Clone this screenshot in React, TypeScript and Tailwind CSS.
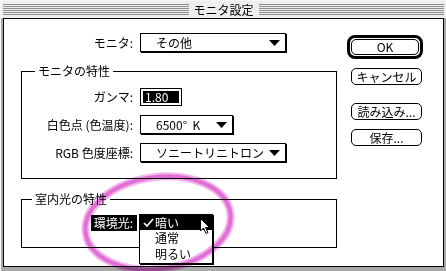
import { ReactNode } from 'react'

/** 클래식 Mac 팝업 메뉴의 ▼ */
function Arrow() {
  return (
    <svg width="11" height="6" viewBox="0 0 11 6" className="shrink-0">
      <path d="M0 0H11L5.5 6Z" fill="#000" />
    </svg>
  )
}

function Popup({ className, children }: { className: string; children: ReactNode }) {
  return (
    <div
      className={`flex h-[19px] items-center border border-black bg-white pl-[15px] pr-[5px] leading-[14px] shadow-[1px_1px_0_#000] ${className}`}
    >
      <span className="flex-1 whitespace-pre">{children}</span>
      <Arrow />
    </div>
  )
}

function Row({ label, children }: { label: string; children: ReactNode }) {
  return (
    <div className="flex h-[19px] items-center">
      <span className="w-[111px] text-right leading-[14px]">{label}</span>
      <div className="ml-[7px]">{children}</div>
    </div>
  )
}

function Button({ children }: { children: ReactNode }) {
  return (
    <div className="ml-[4px] flex h-[17px] w-[71px] items-center justify-center rounded-[5px] border border-black bg-white leading-[14px]">
      {children}
    </div>
  )
}

export default function App() {
  return (
    <div className="relative flex h-[271px] w-[446px] flex-col overflow-hidden border-l border-t border-[#f6f6f6] bg-[#a9a9a9] font-['Noto_Sans_CJK_JP','DejaVu_Sans',sans-serif] text-[12px] text-black">
      {/* 타이틀 바 */}
      <div className="flex h-[17px] items-center bg-[#eeeeee]">
        <div className="ml-[2px] h-[11px] flex-1 bg-[repeating-linear-gradient(to_bottom,#8c8c8c_0px,#8c8c8c_1px,transparent_1px,transparent_2px)]" />
        <span className="px-[5px] leading-[14px]">モニタ設定</span>
        <div className="mr-[2px] h-[11px] flex-1 bg-[repeating-linear-gradient(to_bottom,#8c8c8c_0px,#8c8c8c_1px,transparent_1px,transparent_2px)]" />
      </div>

      <div className="mx-[2px] mb-[4px] flex flex-1 border border-black bg-white">
        {/* 좌측: 모니터 선택 + 그룹 박스 */}
        <div className="w-[343px] pl-[17px] pt-[14px]">
          <div className="flex h-[19px] items-center">
            <span className="w-[112px] text-right leading-[14px]">モニタ:</span>
            <Popup className="ml-[7px] w-[146px]">その他</Popup>
          </div>

          <fieldset className="mt-[12px] w-[316px] border border-black pb-[16px] pt-[9px]">
            <legend className="ml-[13px] px-[3px] leading-[14px]">モニタの特性</legend>
            <div className="flex flex-col gap-[9px]">
              <Row label="ガンマ:">
                <div className="h-[18px] w-[42px] border border-black bg-white p-[2px]">
                  <div className="h-full bg-black pl-[2px] leading-[12px] text-white">1.80</div>
                </div>
              </Row>
              <Row label="白色点 (色温度):">
                <Popup className="w-[93px] pr-[3px]">6500°  K</Popup>
              </Row>
              <Row label="RGB 色度座標:">
                <Popup className="w-[146px]">ソニートリニトロン</Popup>
              </Row>
            </div>
          </fieldset>

          <fieldset className="mt-[13px] w-[316px] border border-black pb-[16px] pt-[9px]">
            <legend className="ml-[10px] px-[3px] leading-[14px]">室内光の特性</legend>
            <div className="flex h-[16px] items-center">
              <div className="flex w-[115px] justify-end">
                <span className="bg-black pl-[3px] pr-[4px] leading-[16px] text-white">環境光:</span>
              </div>
              <div className="relative ml-[2px] h-[16px] w-[74px]">
                {/* 열린 팝업 메뉴 */}
                <div className="absolute left-0 top-[-1px] z-10 w-[74px] border border-black bg-white pb-[1px] shadow-[1px_1px_0_#000]">
                  <div className="flex h-[15px] items-center bg-black pl-[3px] leading-[14px] text-white">
                    <svg width="12" height="9" viewBox="0 0 12 9" className="shrink-0">
                      <path d="M1 5L4 8L10 1" stroke="#fff" strokeWidth="1.6" fill="none" />
                    </svg>
                    <span>暗い</span>
                  </div>
                  <div className="flex h-[16px] items-center pl-[15px] leading-[14px]">通常</div>
                  <div className="flex h-[16px] items-center pl-[15px] leading-[14px]">明るい</div>
                  {/* 마우스 커서 */}
                  <svg width="12" height="16" viewBox="0 0 12 16" className="absolute left-[60px] top-[3px]">
                    <path
                      d="M0.5 0.5V13L3.5 10L6 15.5L8 14.5L5.5 9.5H9.5Z"
                      fill="#fff"
                      stroke="#000"
                      strokeWidth="1"
                    />
                  </svg>
                </div>
              </div>
            </div>
          </fieldset>
        </div>

        {/* 우측 버튼 */}
        <div className="flex flex-col items-start pt-[16px]">
          <div className="flex h-[24px] w-[76px] rounded-[8px] border-[3px] border-black bg-white p-[1px]">
            <div className="flex flex-1 items-center justify-center rounded-[5px] border border-black leading-[14px]">
              OK
            </div>
          </div>
          <div className="mt-[9px]">
            <Button>キャンセル</Button>
          </div>
          <div className="mt-[18px]">
            <Button>読み込み...</Button>
          </div>
          <div className="mt-[9px]">
            <Button>保存...</Button>
          </div>
        </div>
      </div>

      {/* 분홍색 손그림 강조 표시 */}
      <svg
        width="446"
        height="271"
        viewBox="0 0 446 271"
        className="pointer-events-none absolute left-0 top-0 z-20 mix-blend-multiply"
      >
        <ellipse
          cx="157"
          cy="222"
          rx="73"
          ry="46"
          transform="rotate(-8 157 222)"
          fill="none"
          stroke="#f3b6ec"
          strokeWidth="8"
        />
        <ellipse
          cx="157"
          cy="222"
          rx="73"
          ry="46"
          transform="rotate(-8 157 222)"
          fill="none"
          stroke="#e070d6"
          strokeWidth="4"
        />
      </svg>
    </div>
  )
}
